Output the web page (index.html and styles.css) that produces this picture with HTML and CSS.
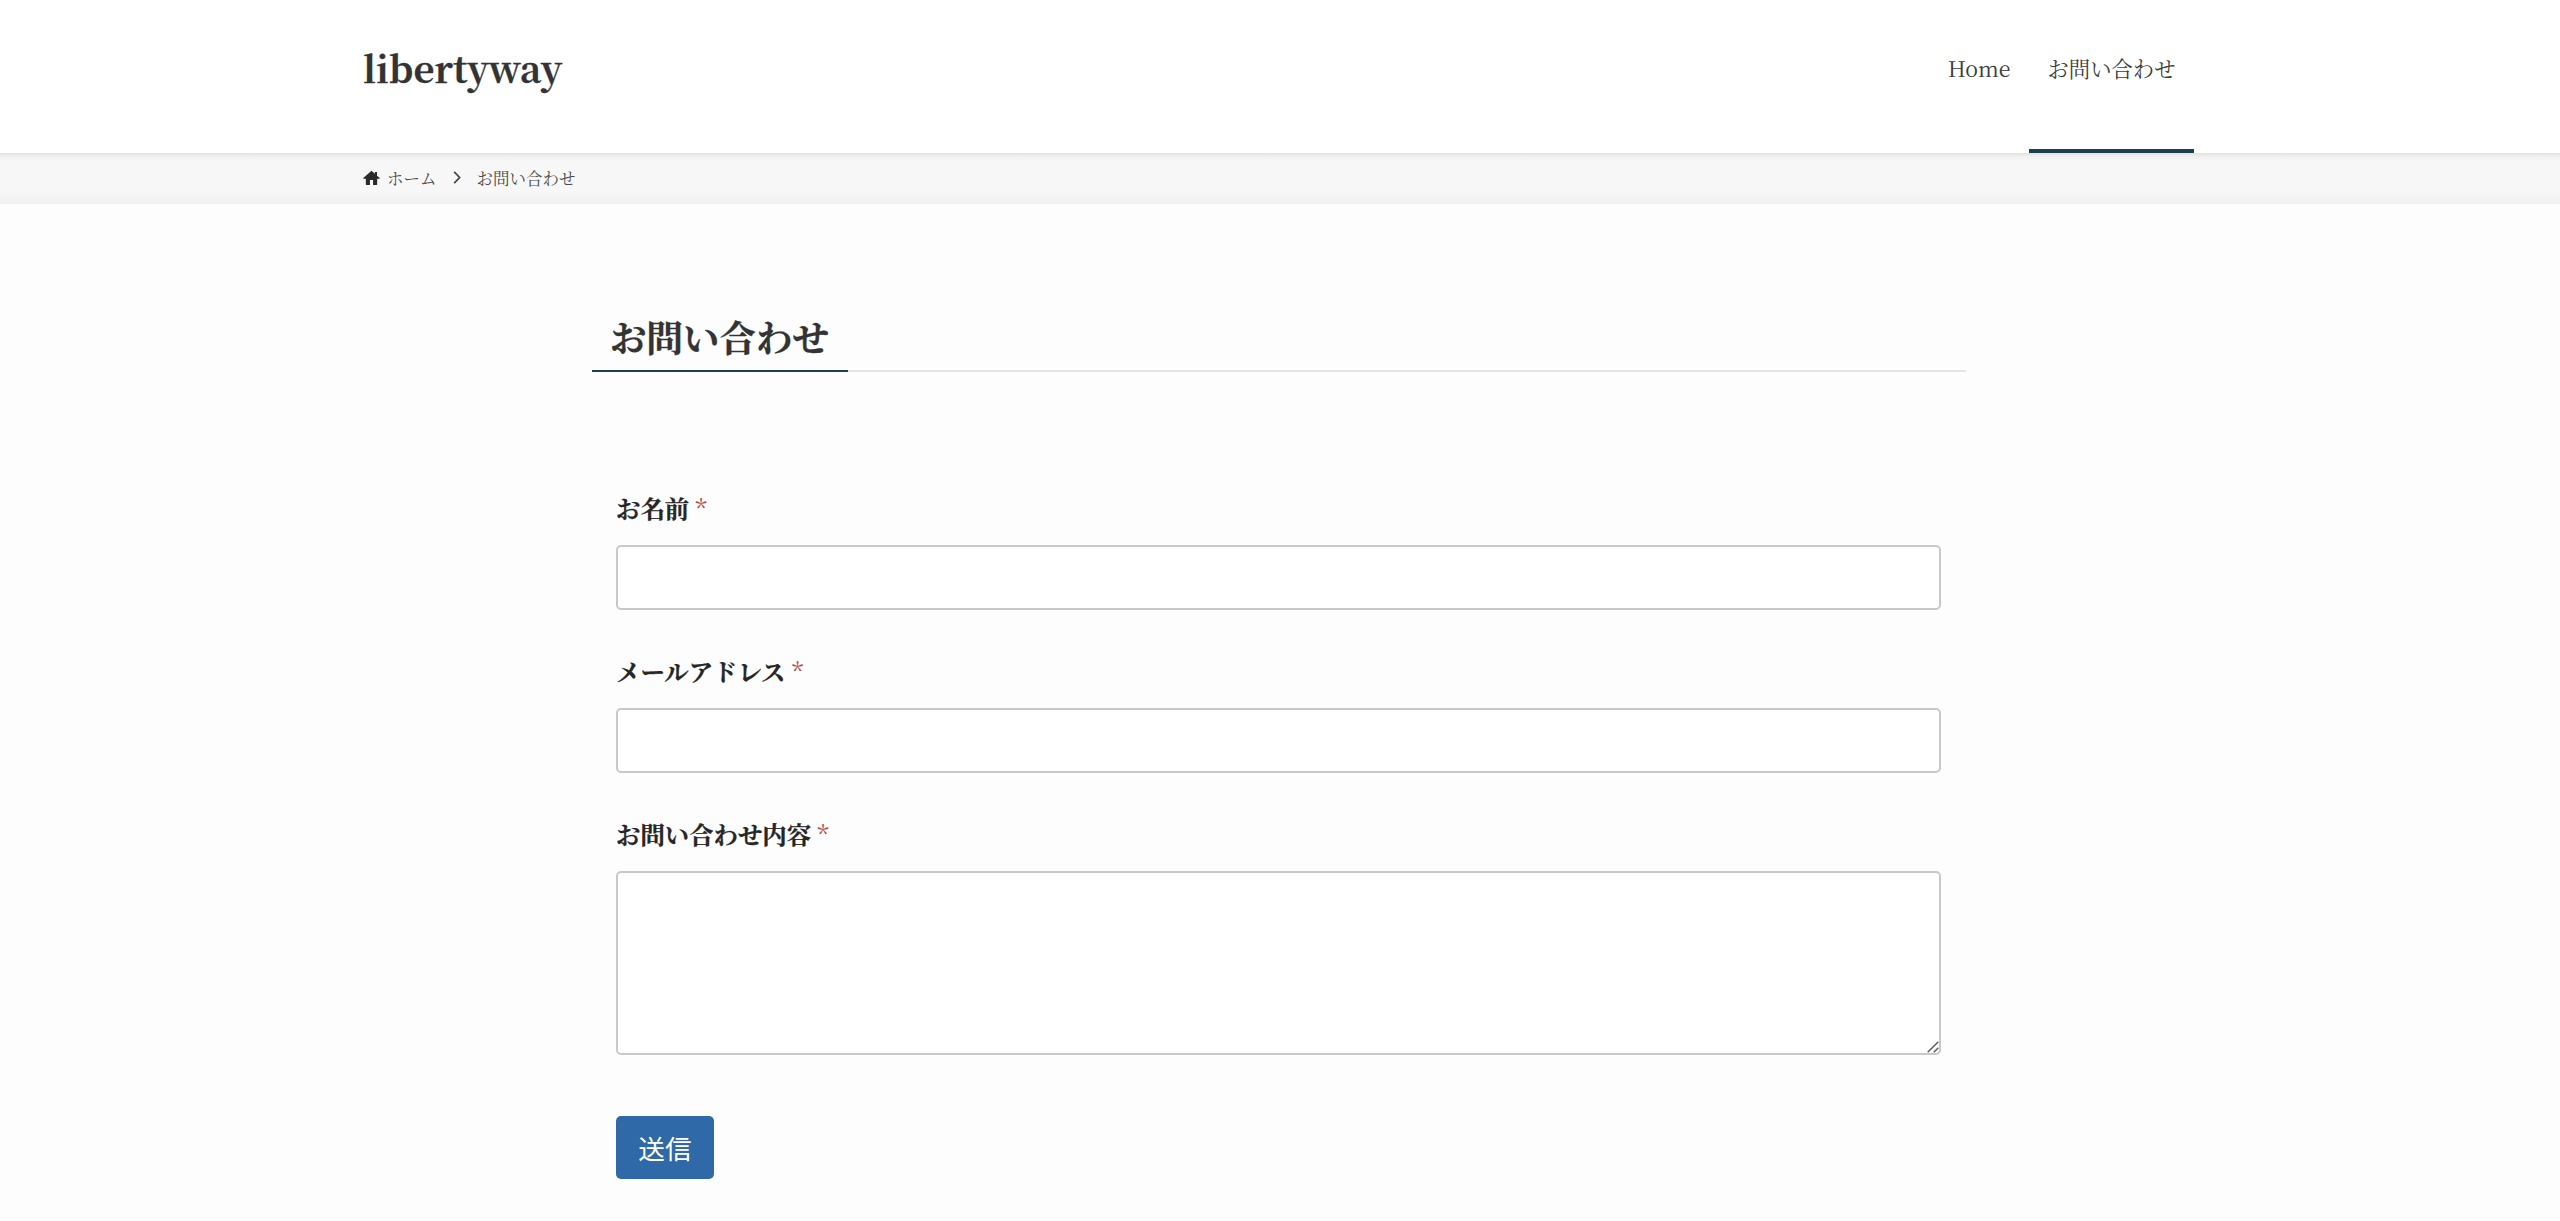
FILE: index.html
```html
<!DOCTYPE html>
<html lang="ja">
<head>
<meta charset="utf-8">
<title>お問い合わせ | libertyway</title>
<link rel="stylesheet" href="styles.css">
</head>
<body>
<header class="site-header">
  <div class="header-inner">
    <a class="logo" href="#">libertyway</a>
    <nav class="main-nav">
      <a class="nav-item" href="#">Home</a>
      <a class="nav-item is-current" href="#">お問い合わせ</a>
    </nav>
  </div>
</header>
<div class="breadcrumb">
  <ol class="crumbs">
    <li class="crumb">
      <svg class="icon-home" viewBox="0 0 24 24" aria-hidden="true"><path d="M12 2.4.4 12.8c-.3.3-.1.8.3.8H4v8.2c0 .4.3.7.7.7h5.1v-7h4.4v7h5.1c.4 0 .7-.3.7-.7v-8.2h3.3c.4 0 .6-.5.3-.8L19.800 9.400V4.200h-3v2.500z"/></svg>
      <a href="#">ホーム</a>
    </li>
    <li class="crumb-sep">
      <svg class="icon-chevron" viewBox="0 0 8 13" aria-hidden="true"><path d="M1.200 .8 6.600 6.500 1.200 12.200"/></svg>
    </li>
    <li class="crumb current">お問い合わせ</li>
  </ol>
</div>
<main class="main">
  <div class="content">
    <h1 class="page-title"><span>お問い合わせ</span></h1>
    <form class="contact-form">
      <div class="field">
        <label class="field-label" for="f-name">お名前 <em>*</em></label>
        <input class="control" id="f-name" type="text">
      </div>
      <div class="field">
        <label class="field-label" for="f-mail">メールアドレス <em>*</em></label>
        <input class="control" id="f-mail" type="email">
      </div>
      <div class="field">
        <label class="field-label" for="f-body">お問い合わせ内容 <em>*</em></label>
        <div class="area-wrap">
          <textarea class="control area" id="f-body"></textarea>
          <svg class="grip" viewBox="0 0 12 12" aria-hidden="true"><path d="M.7 11.300 11.300.7M6.800 11.300l4.500-4.500"/></svg>
        </div>
      </div>
      <button class="submit" type="button">送信</button>
    </form>
  </div>
</main>
</body>
</html>
```
FILE: styles.css
```css
* { box-sizing: border-box; }
html, body { margin: 0; padding: 0; }
body {
  background: #fdfdfd;
  color: #333;
  font-family: "Noto Serif CJK JP", "Source Han Serif JP", "Noto Serif", "Liberation Serif", "Noto Sans CJK JP", serif;
  height: 1221px;
  overflow: hidden;
}
a { color: inherit; text-decoration: none; }

.site-header { background: #fff; height: 153px; padding-right: 3px; }
.header-inner {
  width: 1831px;
  height: 100%;
  margin: 0 auto;
  display: flex;
  justify-content: space-between;
}
.logo {
  font-size: 36.6px;
  font-weight: 700;
  line-height: 134px;
  color: #333;
  -webkit-text-stroke: 0.3px #333;
}
.main-nav { display: flex; }
.nav-item {
  font-size: 21.33px;
  line-height: 135px;
  padding: 0 18.5px;
  height: 153px;
  color: #3c3c3c;
}
.nav-item.is-current { border-bottom: 4px solid #1c3f52; }

.breadcrumb {
  height: 51px;
  padding-right: 3px;
  background: linear-gradient(#e0e0e0 0, #efefef 3px, #f7f7f7 8px, #f7f7f7 calc(100% - 11px), #efefef 100%);
}
.crumbs {
  list-style: none;
  margin: 0 auto;
  padding: 0 0 2px;
  width: 1831px;
  height: 100%;
  display: flex;
  align-items: center;
  font-size: 16.5px;
  color: #4a4a4a;
}
.crumb { display: flex; align-items: center; gap: 7px; }
.crumb-sep { display: flex; align-items: center; padding: 0 16px 0 16px; }
.icon-home { width: 17px; height: 17px; fill: #2b2b2b; }
.icon-chevron { width: 8px; height: 13px; fill: none; stroke: #444; stroke-width: 1.7; }

.main { padding-right: 3px; }
.content { width: 1374px; margin: 0 auto; padding-top: 103px; }
.page-title {
  margin: 0;
  font-size: 36.5px;
  font-weight: 700;
  line-height: 58px;
  border-bottom: 2px solid #e4e4e4;
  height: 65px;
  -webkit-text-stroke: 0.3px #333;
}
.page-title span {
  display: inline-block;
  height: 65px;
  padding: 0 18.5px;
  border-bottom: 2px solid #1c3f52;
}
.contact-form { padding: 118px 24.5px 0; }
.field { margin-bottom: 43px; }
.field-label {
  display: block;
  font-size: 24.4px;
  font-weight: 700;
  line-height: 36px;
  margin-bottom: 19px;
  color: #262626;
  -webkit-text-stroke: 0.25px #262626;
}
.field-label em {
  font-style: normal;
  font-weight: 400;
  color: #b04a4a;
  -webkit-text-stroke: 0;
}
.control {
  display: block;
  width: 100%;
  height: 65px;
  background: #fff;
  border: 2px solid #c8c8c8;
  border-radius: 5px;
  margin: 0;
  padding: 8px 12px;
  font: inherit;
  outline: none;
}
.area-wrap { position: relative; }
.area { height: 184px; resize: none; }
.grip {
  position: absolute;
  right: 2px;
  bottom: 2px;
  width: 12px;
  height: 12px;
  fill: none;
  stroke: #5c5c5c;
  stroke-width: 1.5;
  pointer-events: none;
}
.submit {
  display: block;
  width: 98px;
  height: 63px;
  margin-top: 61px;
  background: #2f69a8;
  border: 0;
  border-radius: 5px;
  color: #fff;
  font-size: 26.67px;
  font-family: "Noto Sans CJK JP", sans-serif;
}
```
